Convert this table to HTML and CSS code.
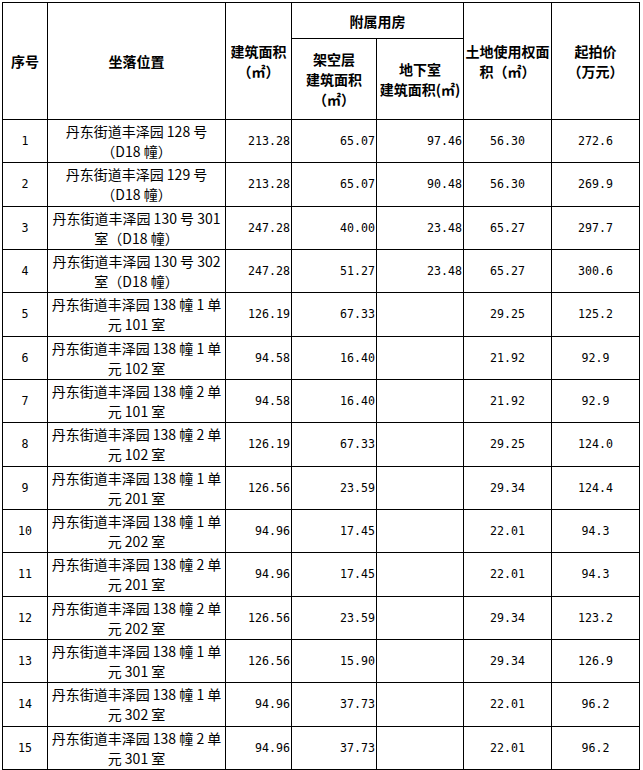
FILE: index.html
```html
<!DOCTYPE html>
<html lang="zh-CN">
<head>
<meta charset="utf-8">
<title>拍卖房产清单</title>
<link rel="stylesheet" href="styles.css">
</head>
<body>
<table class="sheet">
  <colgroup>
    <col class="c-seq"><col class="c-loc"><col class="c-area"><col class="c-open"><col class="c-base"><col class="c-land"><col class="c-price">
  </colgroup>
  <thead>
    <tr class="h1">
      <th rowspan="2">序号</th>
      <th rowspan="2">坐落位置</th>
      <th rowspan="2">建筑面积<br>（㎡）</th>
      <th colspan="2">附属用房</th>
      <th rowspan="2">土地使用权面<br>积（㎡）</th>
      <th rowspan="2">起拍价<br>（万元）</th>
    </tr>
    <tr class="h2">
      <th>架空层<br>建筑面积<br>（㎡）</th>
      <th>地下室<br>建筑面积(㎡)</th>
    </tr>
  </thead>
  <tbody>
    <tr><td class="num mid">1</td><td class="loc">丹东街道丰泽园 128 号<br>（D18 幢）</td><td class="num right">213.28</td><td class="num right">65.07</td><td class="num right">97.46</td><td class="num mid">56.30</td><td class="num mid">272.6</td></tr>
    <tr><td class="num mid">2</td><td class="loc">丹东街道丰泽园 129 号<br>（D18 幢）</td><td class="num right">213.28</td><td class="num right">65.07</td><td class="num right">90.48</td><td class="num mid">56.30</td><td class="num mid">269.9</td></tr>
    <tr><td class="num mid">3</td><td class="loc">丹东街道丰泽园 130 号 301<br>室（D18 幢）</td><td class="num right">247.28</td><td class="num right">40.00</td><td class="num right">23.48</td><td class="num mid">65.27</td><td class="num mid">297.7</td></tr>
    <tr><td class="num mid">4</td><td class="loc">丹东街道丰泽园 130 号 302<br>室（D18 幢）</td><td class="num right">247.28</td><td class="num right">51.27</td><td class="num right">23.48</td><td class="num mid">65.27</td><td class="num mid">300.6</td></tr>
    <tr><td class="num mid">5</td><td class="loc">丹东街道丰泽园 138 幢 1 单<br>元 101 室</td><td class="num right">126.19</td><td class="num right">67.33</td><td class="num right"></td><td class="num mid">29.25</td><td class="num mid">125.2</td></tr>
    <tr><td class="num mid">6</td><td class="loc">丹东街道丰泽园 138 幢 1 单<br>元 102 室</td><td class="num right">94.58</td><td class="num right">16.40</td><td class="num right"></td><td class="num mid">21.92</td><td class="num mid">92.9</td></tr>
    <tr><td class="num mid">7</td><td class="loc">丹东街道丰泽园 138 幢 2 单<br>元 101 室</td><td class="num right">94.58</td><td class="num right">16.40</td><td class="num right"></td><td class="num mid">21.92</td><td class="num mid">92.9</td></tr>
    <tr><td class="num mid">8</td><td class="loc">丹东街道丰泽园 138 幢 2 单<br>元 102 室</td><td class="num right">126.19</td><td class="num right">67.33</td><td class="num right"></td><td class="num mid">29.25</td><td class="num mid">124.0</td></tr>
    <tr><td class="num mid">9</td><td class="loc">丹东街道丰泽园 138 幢 1 单<br>元 201 室</td><td class="num right">126.56</td><td class="num right">23.59</td><td class="num right"></td><td class="num mid">29.34</td><td class="num mid">124.4</td></tr>
    <tr><td class="num mid">10</td><td class="loc">丹东街道丰泽园 138 幢 1 单<br>元 202 室</td><td class="num right">94.96</td><td class="num right">17.45</td><td class="num right"></td><td class="num mid">22.01</td><td class="num mid">94.3</td></tr>
    <tr><td class="num mid">11</td><td class="loc">丹东街道丰泽园 138 幢 2 单<br>元 201 室</td><td class="num right">94.96</td><td class="num right">17.45</td><td class="num right"></td><td class="num mid">22.01</td><td class="num mid">94.3</td></tr>
    <tr><td class="num mid">12</td><td class="loc">丹东街道丰泽园 138 幢 2 单<br>元 202 室</td><td class="num right">126.56</td><td class="num right">23.59</td><td class="num right"></td><td class="num mid">29.34</td><td class="num mid">123.2</td></tr>
    <tr><td class="num mid">13</td><td class="loc">丹东街道丰泽园 138 幢 1 单<br>元 301 室</td><td class="num right">126.56</td><td class="num right">15.90</td><td class="num right"></td><td class="num mid">29.34</td><td class="num mid">126.9</td></tr>
    <tr><td class="num mid">14</td><td class="loc">丹东街道丰泽园 138 幢 1 单<br>元 302 室</td><td class="num right">94.96</td><td class="num right">37.73</td><td class="num right"></td><td class="num mid">22.01</td><td class="num mid">96.2</td></tr>
    <tr><td class="num mid">15</td><td class="loc">丹东街道丰泽园 138 幢 2 单<br>元 301 室</td><td class="num right">94.96</td><td class="num right">37.73</td><td class="num right"></td><td class="num mid">22.01</td><td class="num mid">96.2</td></tr>
  </tbody>
</table>
</body>
</html>
```

FILE: styles.css
```css
html, body {
  margin: 0;
  padding: 0;
  background: #ffffff;
}

body {
  padding: 2px 0 0 2px;
  font-family: "Noto Sans CJK SC", "Noto Sans", sans-serif;
  color: #000000;
  font-size: 14px;
}

.sheet {
  border-collapse: collapse;
  table-layout: fixed;
  width: 637px;
}

.c-seq { width: 45px; }
.c-loc { width: 178px; }
.c-area { width: 66px; }
.c-open { width: 85px; }
.c-base { width: 87px; }
.c-land { width: 88px; }
.c-price { width: 88px; }

.sheet th,
.sheet td {
  border: 1px solid #000000;
  padding: 0 1px;
  vertical-align: middle;
  white-space: nowrap;
  line-height: 20px;
}

.sheet th {
  font-weight: 700;
  font-size: 14px;
  text-align: center;
  padding: 0;
}

.h1 { height: 36px; }
.h2 { height: 81px; }

.sheet tbody tr { height: 43.33px; }

.loc {
  text-align: center;
  font-size: 14px;
}

.num {
  font-family: "DejaVu Sans Mono", "Liberation Mono", monospace;
  font-size: 11.6px;
}

.right {
  text-align: right;
  padding-right: 2px;
}

.mid {
  text-align: center;
}
```
